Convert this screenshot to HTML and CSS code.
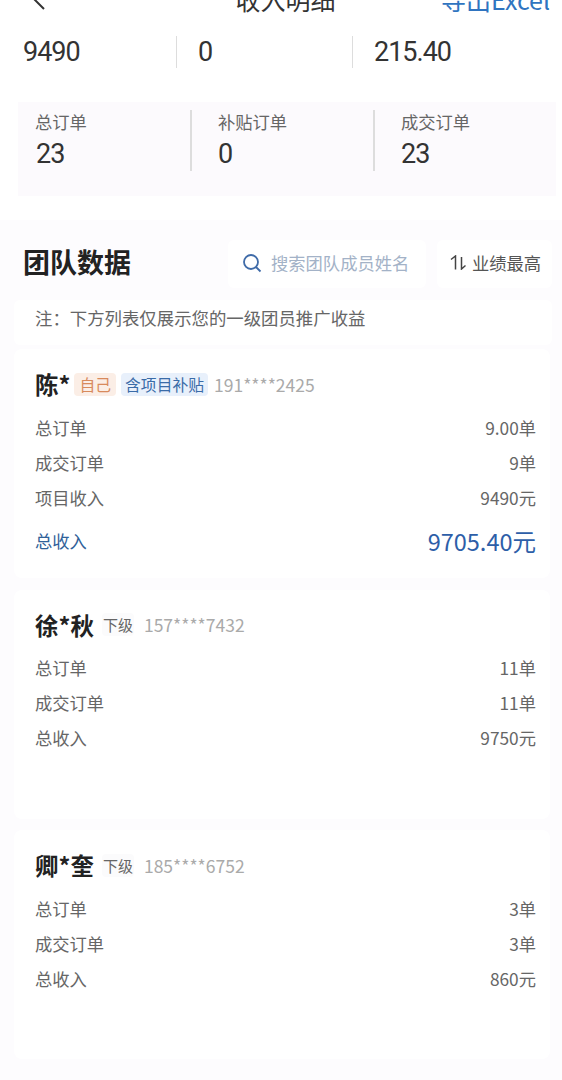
FILE: index.html
```html
<!DOCTYPE html>
<html lang="zh-CN">
<head>
<meta charset="utf-8">
<title>收入明细</title>
<link rel="stylesheet" href="styles.css">
</head>
<body>
<div class="top">
  <header class="nav">
    <svg class="back" width="14" height="22" viewBox="0 0 14 22"><path d="M13 1 3 11l10 10" fill="none" stroke="#333" stroke-width="2"/></svg>
    <h1 class="nav-title">收入明细</h1>
    <a class="nav-export">导出Excel</a>
  </header>
  <div class="stats">
    <div class="stat">9490</div>
    <div class="stat stat-next">0</div>
    <div class="stat stat-next">215.40</div>
  </div>
  <div class="orders">
    <div class="order"><div class="order-label">总订单</div><div class="order-num">23</div></div>
    <div class="order order-next"><div class="order-label">补贴订单</div><div class="order-num">0</div></div>
    <div class="order order-next"><div class="order-label">成交订单</div><div class="order-num">23</div></div>
  </div>
</div>
<main class="team">
  <div class="team-head">
    <h2 class="team-title">团队数据</h2>
    <div class="search">
      <svg width="20" height="20" viewBox="0 0 20 20"><circle cx="9" cy="9" r="7" fill="none" stroke="#3f6ba8" stroke-width="1.8"/><path d="m14 14 4.500 4.500" stroke="#3f6ba8" stroke-width="1.800" fill="none"/></svg>
      <span class="search-text">搜索团队成员姓名</span>
    </div>
    <div class="sort">
      <svg width="17" height="15" viewBox="0 0 17 15"><path d="M5.500 14.500V1L1 4.500M11.500 2v12l4-3.500" fill="none" stroke="#444" stroke-width="1.500"/></svg>
      <span>业绩最高</span>
    </div>
  </div>
  <div class="note">注：下方列表仅展示您的一级团员推广收益</div>
  <section class="card">
    <div class="person">
      <span class="name">陈*</span>
      <span class="tag tag-self">自己</span>
      <span class="tag tag-sub">含项目补贴</span>
      <span class="phone">191****2425</span>
    </div>
    <div class="row"><span>总订单</span><span>9.00单</span></div>
    <div class="row"><span>成交订单</span><span>9单</span></div>
    <div class="row"><span>项目收入</span><span>9490元</span></div>
    <div class="row row-total"><span>总收入</span><span class="total">9705.40元</span></div>
  </section>
  <section class="card">
    <div class="person">
      <span class="name">徐*秋</span>
      <span class="tag tag-low">下级</span>
      <span class="phone">157****7432</span>
    </div>
    <div class="row"><span>总订单</span><span>11单</span></div>
    <div class="row"><span>成交订单</span><span>11单</span></div>
    <div class="row"><span>总收入</span><span>9750元</span></div>
  </section>
  <section class="card">
    <div class="person">
      <span class="name">卿*奎</span>
      <span class="tag tag-low">下级</span>
      <span class="phone">185****6752</span>
    </div>
    <div class="row"><span>总订单</span><span>3单</span></div>
    <div class="row"><span>成交订单</span><span>3单</span></div>
    <div class="row"><span>总收入</span><span>860元</span></div>
  </section>
</main>
</body>
</html>
```
FILE: styles.css
```css
* { box-sizing: border-box; }
html, body { margin: 0; padding: 0; }
body {
  width: 562px;
  height: 1080px;
  overflow: hidden;
  background: #fdfcfe;
  font-family: "Noto Sans CJK SC", "Noto Sans", sans-serif;
  color: #555;
}
.top { background: #fff; height: 220px; overflow: hidden; }
.nav {
  display: flex;
  align-items: center;
  justify-content: space-between;
  height: 28px;
  margin-top: -15px;
  padding: 0 12px 0 31px;
}
.back { flex: none; }
.nav-title { margin: 0 0 0 85px; font-size: 25px; font-weight: 400; color: #333; line-height: 28px; }
.nav-export { font-size: 25px; color: #2f74c0; line-height: 28px; }
.stats { display: flex; height: 32px; margin-top: 23px; padding-left: 23px; }
.stat {
  width: 153px;
  font-family: Roboto, sans-serif;
  font-size: 27px;
  letter-spacing: -1px;
  line-height: 32px;
  color: #333;
}
.stat-next { width: 176px; border-left: 1px solid #ddd; padding-left: 21px; }
.orders {
  display: flex;
  align-items: stretch;
  height: 94px;
  margin: 34px 6px 0 18px;
  padding: 8px 0 0 18px;
  background: #fcfafd;
}
.order { width: 154px; height: 61px; }
.order-next { width: 183px; border-left: 2px solid #ddd; padding-left: 26px; }
.order-label { font-size: 17.300px; line-height: 24px; color: #666; margin-left: -1px; }
.order-next .order-label { margin-left: 0; }
.order-num { font-family: Roboto, sans-serif; font-size: 27px; line-height: 40px; letter-spacing: -1px; color: #333; }
.team-head { display: flex; align-items: center; height: 48px; margin-top: 20px; padding-left: 23px; }
.team-title { margin: 0 0 5px; width: 205px; font-size: 27px; font-weight: 700; color: #222; line-height: 43px; }
.search {
  display: flex;
  align-items: center;
  gap: 9px;
  width: 198px;
  height: 48px;
  padding: 0 0 2px 14px;
  background: #fff;
  border-radius: 6px;
}
.search-text { font-size: 17.300px; color: #a3b2c7; margin-bottom: 2px; }
.sort {
  display: flex;
  align-items: center;
  gap: 5px;
  width: 115px;
  height: 48px;
  margin-left: 11px;
  padding: 0 0 4px 13px;
  background: #fff;
  border-radius: 6px;
  font-size: 17.300px;
  color: #555;
}
.note {
  margin: 12px 10px 0 14px;
  height: 45px;
  padding-left: 21px;
  background: #fff;
  border-radius: 6px;
  font-size: 17.400px;
  line-height: 35px;
  color: #666;
}
.card {
  height: 229px;
  margin: 4px 12px 11.500px 14px;
  padding: 16px 14px 0 21px;
  background: #fff;
  border-radius: 8px;
}
.person { display: flex; align-items: center; height: 38px; margin-bottom: 6.500px; }
.name { font-size: 23.500px; font-weight: 700; color: #222; line-height: 38px; margin-right: 8px; }
.tag { font-size: 15.800px; line-height: 23px; height: 23px; padding: 0 4px; border-radius: 4px; margin-right: 5px; }
.tag-self { background: #fbeee6; color: #d88a5c; padding: 0 5px; margin-left: -4px; }
.tag-sub { background: #e8f0fb; color: #3a6ba8; margin-right: 6px; }
.tag-low { background: #fbfbfc; color: #666; font-size: 15px; padding: 0 1px; margin-right: 10px; }
.phone { font-size: 17.500px; color: #aaa; }
.row {
  display: flex;
  justify-content: space-between;
  height: 35px;
  align-items: center;
  font-size: 17.300px;
  color: #666;
}
.row-total { height: 46px; margin-top: 3px; color: #2f6199; }
.total { font-size: 23.500px; color: #2d5ea8; }
```
